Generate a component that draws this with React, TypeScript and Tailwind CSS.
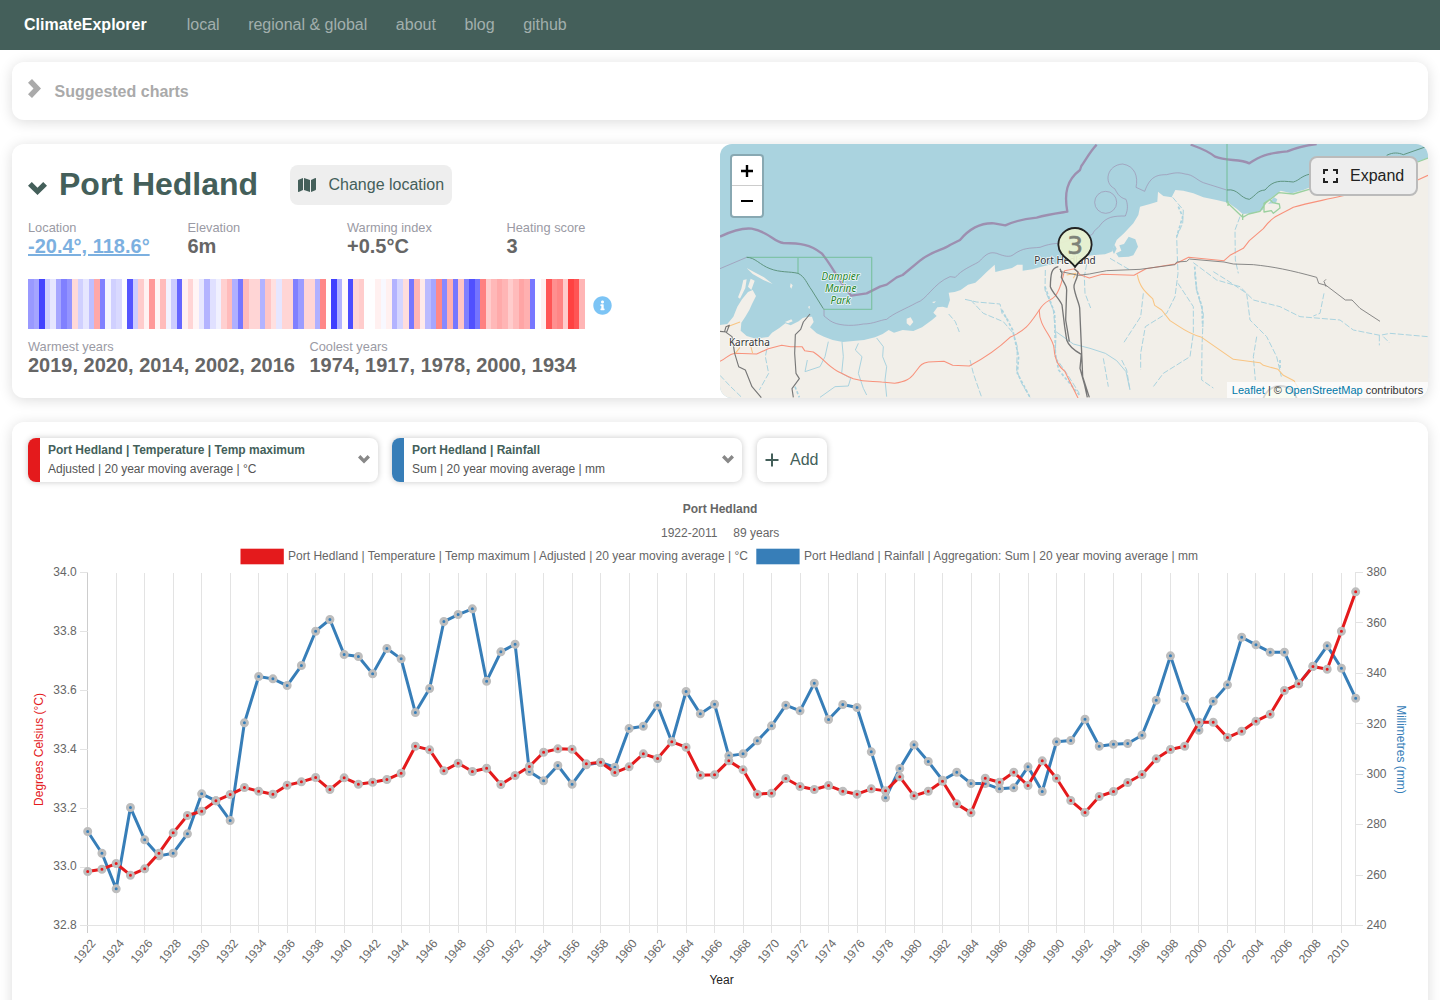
import React from "react";
import { FaMap, FaInfoCircle } from "react-icons/fa";

const stripes =
  "9999ff a5a5ff 4242ff ccccff e6e6ff a6a6ff 8080ff 9494ff ffd9d9 d0d0ff e6e6ff bfbfff ffa8a8 8080ff f4f4ff d0d0ff d9d9ff fcfcff 5555ff ccccff ffcccc fff2f2 ff9999 fff5f5 ffbbbb f2f2ff ccccff 6666ff fff0f0 ffd5d5 fff5f5 e6e6ff b3b3ff e0e0ff f0f0ff ffd0d0 ffbbbb b0b0ff 7777ff ffbbbb ffd5d5 ffd5d5 b3b3ff ffc5c5 ffe0e0 e6e6ff ffd5d5 ffd5d5 8080ff 9c9cff ffd5d5 ffd5d5 b0b0ff ff8888 ffffff 4040ff b3b3ff fffafa 4d4dff ffd5d5 ffcccc fefeff fefeff fff0f0 f8f8ff fff0f0 b3b3ff d5d5ff ffdddd 7777ff ffb5b5 ffeaea bbbbff a6a6ff ff8888 8888ff ffb0b0 7777ff ffc5c5 8080ff 5050ff 7474ff ff8080 ffcccc ffb8b8 ffaaaa ffb5b5 ffcccc ffbbbb ffa5a5 ffb0b0 7777ff fefeff fff0f0 ff5555 ff8f8f ff8585 ffcccc ff4242 ff5555 ffb5b5".split(" ");

// Series samples, one per year from 1922, in thirds of a pixel below the chart origin.
const rainfall = [
  814, 879, 986, 742, 839, 887, 879, 821, 701, 722, 781, 488, 349, 356, 376, 316, 213, 178, 283, 289, 341, 265, 296, 457, 385, 184, 163, 146,
  363, 275, 252, 634, 662, 616, 672, 614, 607, 621, 505, 498, 435, 545, 394, 461, 432, 587, 581, 542, 497, 435, 452, 369, 478, 433, 442, 575,
  713, 625, 554, 604, 660, 636, 670, 670, 686, 683, 620, 694, 545, 541, 477, 558, 552, 550, 525, 420, 287, 415, 510, 423, 374, 231, 254, 276,
  276, 371, 318, 257, 324, 414,
];
const temperature = [
  934, 927, 910, 945, 926, 879, 818, 766, 753, 722, 703, 682, 693, 702, 675, 665, 652, 688, 653, 672, 666, 658, 639, 558, 569, 632, 609, 634,
  624, 673, 646, 619, 576, 566, 567, 611, 606, 637, 620, 581, 595, 545, 561, 645, 644, 602, 629, 702, 699, 655, 679, 688, 676, 693, 702, 686,
  692, 650, 707, 693, 663, 731, 758, 654, 666, 636, 676, 602, 654, 721, 757, 709, 694, 667, 643, 596, 568, 558, 486, 486, 532, 513, 483, 462,
  391, 371, 319, 327, 213, 95,
];

const px = (i: number) => 87.7 + i * 14.247;
const py = (v: number) => 560.2 + v / 3;

function Series({ data, color }: { data: number[]; color: string }) {
  return (
    <g>
      <polyline points={data.map((v, i) => `${px(i)},${py(v)}`).join(" ")} fill="none" stroke={color} strokeWidth="3" strokeLinejoin="round" />
      {data.map((v, i) => (
        <circle key={i} cx={px(i)} cy={py(v)} r="3" fill={color} stroke="#bdbdbd" strokeWidth="3" />
      ))}
    </g>
  );
}

function Chart() {
  const years = Array.from({ length: 45 }, (_, i) => 1922 + i * 2);
  return (
    <svg width="1416" height="510" viewBox="12 490 1416 510" className="block text-[12px]" fontFamily="'Liberation Sans', Arial, sans-serif" fill="#666">
      <text x="720" y="513" textAnchor="middle" fontWeight="bold">Port Hedland</text>
      <text x="661" y="537">1922-2011</text>
      <text x="733.3" y="537">89 years</text>
      <rect x="240.5" y="548.7" width="43.3" height="15.6" fill="#e41a1c" />
      <text x="288" y="560" textLength="460">Port Hedland | Temperature | Temp maximum | Adjusted | 20 year moving average | °C</text>
      <rect x="756.3" y="548.7" width="43.3" height="15.6" fill="#377eb8" />
      <text x="804" y="560" textLength="394">Port Hedland | Rainfall | Aggregation: Sum | 20 year moving average | mm</text>
      <g shapeRendering="crispEdges" stroke="#e3e3e3">
        {years.map((y, i) => (
          <line key={y} x1={Math.floor(px(i * 2)) + 0.5} x2={Math.floor(px(i * 2)) + 0.5} y1="573" y2="933" stroke={i === 0 ? "#cdcdcd" : "#e3e3e3"} />
        ))}
        <line x1="1355.5" x2="1355.5" y1="572" y2="926" />
        <line x1="80" x2="1363" y1="925.5" y2="925.5" />
        {[0, 1, 2, 3, 4, 5].map((i) => (
          <line key={i} x1="80" x2="88" y1={Math.floor(572.5 + i * 58.9) + 0.5} y2={Math.floor(572.5 + i * 58.9) + 0.5} />
        ))}
        {[0, 1, 2, 3, 4, 5, 6].map((i) => (
          <line key={i} x1="1356" x2="1363" y1={Math.floor(572.5 + i * 50.45) + 0.5} y2={Math.floor(572.5 + i * 50.45) + 0.5} />
        ))}
      </g>
      {["34.0", "33.8", "33.6", "33.4", "33.2", "33.0", "32.8"].map((t, i) => (
        <text key={t} x="76.7" y={576.3 + i * 58.83} textAnchor="end">{t}</text>
      ))}
      {[380, 360, 340, 320, 300, 280, 260, 240].map((t, i) => (
        <text key={t} x="1366.5" y={576.3 + i * 50.43}>{t}</text>
      ))}
      {years.map((y, i) => (
        <text key={y} textAnchor="end" transform={`translate(${px(i * 2) + 5.5} 941) rotate(-50)`} dy="4">{y}</text>
      ))}
      <text transform="translate(43 749.5) rotate(-90)" textAnchor="middle" fill="#e41a1c">Degrees Celsius (°C)</text>
      <text transform="translate(1397 749.5) rotate(90)" textAnchor="middle" fill="#377eb8">Millimetres (mm)</text>
      <text x="721.5" y="984" textAnchor="middle" fill="#222">Year</text>
      <Series data={rainfall} color="#377eb8" />
      <Series data={temperature} color="#e41a1c" />
    </svg>
  );
}

function MapDrawing() {
  return (
    <svg width="708" height="254" viewBox="0 12 2124 762" className="block" fill="none" strokeLinejoin="round">
      <rect y="12" width="2124" height="762" fill="#aad3df" />
      <path
        fill="#f2efe9"
        d="M0 555 L22 552 40 530 52 500 66 478 84 456 98 450 108 468 96 492 88 510 76 530 64 548 62 572 80 588 108 596 145 591 156 578 178 564 196 550 212 556 236 544 248 534 262 530 276 530 281 546 270 562 290 580 312 590 338 600 368 606 400 603 432 600 465 592 488 582 506 570 522 578 548 570 580 573 606 562 636 540 650 528 640 518 652 502 668 500 682 504 690 480 686 458 704 456 722 450 744 434 766 428 784 412 800 396 824 374 826 396 850 390 876 384 892 374 908 374 908 392 938 388 964 380 988 374 1010 372 1034 358 1080 350 1125 345 1155 343 1175 335 1190 300 1212 280 1240 250 1255 225 1260 200 1290 192 1312 185 1314 155 1330 168 1355 172 1366 150 1390 152 1420 160 1450 172 1490 180 1525 188 1550 206 1568 222 1600 220 1628 210 1640 184 1670 162 1682 152 1715 160 1750 150 1800 130 2093 66 2124 54 V774 H0Z"
      />
      <g fill="#f2efe9">
        <path d="M80 384 L102 396 132 412 158 432 130 420 98 402Z M70 420 L80 418 76 444 60 476 54 472 64 446Z M92 416 L104 422 94 450 84 440Z M212 430 L218 436 214 446 210 440Z M560 536 L572 532 580 546 570 558 560 550Z M195 546 L214 538 218 544 204 550Z M264 500 L270 498 268 508Z M636 486 L648 484 642 490Z" />
      </g>
      <path fill="#aad3df" d="M1198 316 L1212 312 1226 290 1246 298 1254 320 1240 346 1226 350 1196 352 1188 340 1204 332Z M1176 330 L1184 314 1190 326 1182 342Z M1644 192 L1662 172 1672 178 1668 188Z" />
      <g stroke="#aad3df" strokeWidth="3" strokeDasharray="18 6">
        <path d="M686 522 L706 545 718 576 M752 480 L790 520 850 545 880 580 892 620 890 690 905 730 930 772 M735 478 L770 486 840 492 846 520 870 545 M750 660 L760 700 772 735 785 772 M145 605 L136 650 146 700 118 750 M0 706 L30 738 65 772 M976 390 L975 450 1000 510 1008 590 1005 650 1040 700 1078 760 M1100 372 L1093 410 1095 460 1112 504" />
        <path d="M1358 172 L1390 210 1388 250 1370 290 1372 350 1374 400 1365 470 1340 520 1276 560 1262 640 1262 690 M1374 430 L1420 500 1420 580 1410 650 1330 700 1300 740 M1424 400 L1430 450 1450 520 1446 620 1445 720 1480 744 M1420 368 L1490 420 1560 440 1600 480 1680 500 1740 530 1860 540 1900 570 1980 586 2010 580 2124 590 M1480 395 L1520 420 1580 460 1590 540 1640 590 1670 650 1684 710 M1610 590 L1600 650 1606 720 M1560 230 L1545 270 1546 360 1555 400 M1270 460 L1262 530 1210 610 M1812 460 L1800 520 1780 528 M1978 586 L1978 616 M1990 590 L2008 608 M1170 355 L1230 390 M1205 660 L1220 690 1230 750 M1150 655 L1165 740" />
      </g>
      <g stroke="#aad3df" strokeWidth="3">
        <path d="M325 605 L315 650 300 680 255 695 262 660 M366 606 L370 650 365 700 392 715 385 738 345 740 300 772 M415 610 L406 630 426 650 415 700 430 745 440 765 M470 594 L490 620 488 650 500 680 495 720 500 770 M1008 575 L1060 612 1110 625 1156 640 1190 662 1218 695 1230 750" />
      </g>
      <g stroke="#aad3df" strokeWidth="5" strokeDasharray="9 6">
        <path d="M846 510 L878 570 896 650 892 700 930 772 M975 440 L1004 520 1006 640 1016 690 1078 765 M1424 380 L1430 450 1446 500 1448 560 M1375 200 L1388 230 1370 290 M225 740 L238 772 M1680 660 L1680 690" />
      </g>
      <g stroke="#9d8fb0" strokeWidth="7">
        <path d="M0 290 C50 266 75 264 95 266 C150 276 160 306 190 309 C240 310 270 312 305 340 C335 375 360 430 394 467 L440 460 480 440 500 434 530 412 548 405 600 362 C640 330 670 330 690 315 L720 300 C745 270 780 248 822 250 L856 256 C890 240 920 236 950 233 C980 224 1010 220 1042 215 C1032 160 1040 120 1080 90 L1084 78 C1100 55 1110 35 1130 14" />
        <path d="M1412 14 C1440 24 1460 30 1485 50 C1520 64 1560 56 1588 70 C1620 48 1640 40 1702 34 C1730 22 1760 16 1790 12" />
      </g>
      <g stroke="#9d8fb0" strokeWidth="2">
        <path d="M0 386 L80 352 M312 506 V528 L330 542 C350 556 390 560 430 552 C460 552 480 540 500 538 C520 520 560 505 590 488 C620 480 640 430 690 410 L706 412 C725 390 750 380 776 366 C800 340 810 335 830 340 C855 350 870 352 880 344 C910 322 930 325 960 322 C985 312 1005 310 1020 310 L1075 292 1098 294 1118 282 C1125 265 1135 266 1140 256 C1160 230 1180 228 1216 228 C1226 205 1222 190 1218 178 C1195 172 1190 155 1184 146 C1150 130 1160 75 1208 72 C1245 78 1255 110 1248 142 L1274 154 C1290 110 1310 104 1340 104 C1370 96 1380 98 1395 102 C1420 104 1430 120 1450 128 L1520 150" />
        <circle cx="1157" cy="187" r="33" />
      </g>
      <g stroke="#6aba8c" strokeOpacity=".65" strokeWidth="4">
        <path d="M80 352 H455 V508 H310 M234 352 V400 M1521 12 V190" />
      </g>
      <g stroke="#5f9580" strokeWidth="3">
        <path d="M80 352 C105 352 120 375 150 386 C180 398 210 394 234 400 C255 410 260 430 275 450 L310 506 M1521 150 C1555 145 1560 175 1588 178 C1610 165 1610 152 1635 150 C1660 120 1680 122 1720 126 C1740 120 1740 110 1770 102 M2000 46 C2020 36 2035 38 2050 44 L2124 18" />
      </g>
      <g stroke="#9bd09f" strokeWidth="4">
        <path d="M1524 184 V198 M1524 190 L1568 232 1586 222 1620 214 1636 190 1676 158 1720 162 1775 146 M1632 190 L1650 178 1658 188 1678 192 1680 204 1660 220 1654 212 1632 216Z M2093 66 L2124 54 M1568 222 V240" />
      </g>
      <g stroke="#f8927c" strokeWidth="3.2">
        <path d="M0 664 C20 655 25 642 45 640 L110 642 145 626 185 616 212 620 246 620 254 632 280 636 C310 655 320 675 350 692 C370 702 375 706 400 716 C440 728 460 722 485 726 L524 730 C560 725 570 715 578 706 C600 680 600 670 625 666 L672 664 698 676 748 678 C800 650 830 630 870 592 C920 570 930 550 958 510 C975 480 990 485 1006 468 C1025 440 1025 420 1034 392 L1064 386 1080 404 1108 414 1146 403 1242 406 1278 386 1365 372 1406 352 1512 362 1530 346 1570 325 1588 302 1630 266 C1660 225 1680 225 1720 202 C1760 190 1790 185 1865 168 L2093 120 2124 106" />
        <path d="M958 508 C955 560 1000 590 1002 625 C1005 665 1018 680 1035 695 C1050 725 1062 750 1074 774" />
      </g>
      <g stroke="#f9c583" strokeWidth="3.2">
        <path d="M1252 404 C1258 440 1275 455 1298 476 L1304 496 1325 510 1350 542 C1380 560 1400 580 1445 592 L1540 658 1620 668 1630 676 1674 688 1690 706 1722 722 1735 745 M46 640 L60 622 M98 640 L90 610 M1040 405 L1068 400 1060 415 M22 560 L60 546" />
      </g>
      <g stroke="#777" strokeWidth="3.4">
        <path d="M0 574 L20 576 28 556 18 560 14 574 36 590 44 640 56 680 76 690 96 740 124 773 M270 522 L250 546 242 568 226 584 224 640 228 700 238 716 216 746 220 772" />
        <path d="M1020 394 L1075 406 1108 402 1160 392 1260 388 1365 374 1370 366 1400 364 1408 357 1512 366 1540 372 1600 374 C1660 380 1710 390 1790 412 L1796 430 1818 436 1876 480 1896 480 1920 505 1980 544 M1818 440 L1812 424 1818 418" strokeWidth="2.6" />
        <path
          strokeWidth="4"
          d="M1062 386 L1074 396 1072 408 C1068 425 1061 430 1062 442 C1066 470 1078 490 1079 505 L1085 640 1088 710 1108 772 M1015 380 C994 384 992 400 991 440 C998 460 1018 475 1026 495 L1034 560 1040 600 C1046 618 1060 630 1084 643 L1080 685 1094 735 1102 772 M1020 386 L1026 400 1024 412 C1034 435 1040 435 1040 450 L1037 540 1048 605"
        />
      </g>
      <g stroke="#fff" strokeOpacity=".8" strokeWidth="5" paintOrder="stroke" fontFamily="'Noto Sans', sans-serif" fontSize="30" textAnchor="middle">
        <text x="1035" y="371" textLength="184" fill="#333">Port Hedland</text>
        <text x="88" y="617" fill="#333">Karratha</text>
        <g fill="#24852c" fontStyle="italic">
          <text x="362" y="421" textLength="115">Dampier</text>
          <text x="362" y="456">Marine</text>
          <text x="362" y="493">Park</text>
        </g>
      </g>
      <g fill="#eaf2d0" stroke="#222" strokeWidth="5.5">
        <circle cx="1680" cy="790" r="52" stroke="#777" />
        <path fillOpacity=".93" d="M1065 381 C1052 358 1016 350 1015 314 A50 50 0 0 1 1115 314 C1114 350 1078 358 1065 381Z" />
      </g>
      <text x="1065" y="341" textAnchor="middle" fontFamily="'DejaVu Sans', sans-serif" fontSize="74" fill="#7d8278" stroke="#7d8278" strokeWidth="2">3</text>
    </svg>
  );
}

function Chevron({ w, h, color }: { w: number; h: number; color: string }) {
  return (
    <svg width={w} height={h} viewBox="0 0 19 13" fill={color} preserveAspectRatio="none">
      <path d="M0 3.8 3.8 0 9.5 5.7 15.2 0 19 3.8 9.5 13Z" />
    </svg>
  );
}

function Stat({ label, value, link }: { label: string; value: string; link?: boolean }) {
  return (
    <div>
      <div className="text-[12.8px] leading-[16px] text-[#9a9aa4]">{label}</div>
      <div className={link ? "text-xl leading-[20px] font-bold text-[#7cb0e0] underline" : "text-xl leading-[20px] font-bold text-[#666]"}>{value}</div>
    </div>
  );
}

function SeriesPill({ bar, title, detail }: { bar: string; title: string; detail: string }) {
  return (
    <div className="flex h-[44px] w-[350px] overflow-hidden rounded-lg bg-white text-xs shadow-[0_0_6px_rgba(0,0,0,0.22)]">
      <div className={`w-3 ${bar}`} />
      <div className="flex-1 pt-[3px] pl-2 leading-[19px]">
        <div className="font-bold text-[#445f5a]">{title}</div>
        <div className="text-[#555]">{detail}</div>
      </div>
      <div className="mt-[17px] mr-2">
        <Chevron w={12} h={8.5} color="#888" />
      </div>
    </div>
  );
}

export default function App() {
  const card = "rounded-xl bg-white shadow-[0_2px_14px_rgba(0,0,0,0.14)]";
  return (
    <div className="h-[1000px] w-[1440px] overflow-hidden bg-white font-['Liberation_Sans',Arial,sans-serif]">
      <header className="flex h-[50px] items-center bg-[#445f5a] pl-6 text-base text-[#a2afad]">
        <span className="font-bold text-white">ClimateExplorer</span>
        <nav className="flex gap-[28.5px] pl-10">
          <a>local</a>
          <a>regional &amp; global</a>
          <a>about</a>
          <a>blog</a>
          <a>github</a>
        </nav>
      </header>
      <main className="flex flex-col gap-6 px-3 pt-3">
        <section className={`flex h-[58px] gap-[13.5px] pl-4 ${card}`}>
          <svg className="mt-[17px]" width="13" height="19" viewBox="0 0 13 19" fill="#aaa">
            <path d="M4 0 13 9.5 4 19 0 15.3 5.5 9.5 0 3.7Z" />
          </svg>
          <h2 className="mt-[18px] font-bold text-[#aaa]">Suggested charts</h2>
        </section>

        <section className={`flex h-[254px] ${card}`}>
          <div className="w-[708px] pl-4">
            <div className="flex h-[61px] items-start pt-[21px]">
              <div className="mt-[17px] mr-3 flex">
                <Chevron w={19} h={13} color="#445f5a" />
              </div>
              <h1 className="w-[231px] text-[32px] leading-[38px] font-bold text-[#445f5a]">Port Hedland</h1>
              <button className="flex h-10 w-[162px] items-center rounded-lg bg-[#eee] pl-2 text-[#445f5a]">
                <FaMap size={18} />
                <span className="pl-[12.5px]">Change location</span>
              </button>
            </div>
            <div className="mt-[15px] flex">
              <div className="w-[159.5px]"><Stat label="Location" value="-20.4°, 118.6°" link /></div>
              <div className="w-[159.5px]"><Stat label="Elevation" value="6m" /></div>
              <div className="w-[159.5px]"><Stat label="Warming index" value="+0.5°C" /></div>
              <Stat label="Heating score" value="3" />
            </div>
            <div className="mt-[23px] flex items-center">
              <svg width="557" height="50" viewBox="0 0 557 50" shapeRendering="crispEdges">
                {stripes.map((c, i) => (
                  <rect key={i} x={(i * 557) / 101} width={5.6} height="50" fill={`#${c}`} />
                ))}
              </svg>
              <FaInfoCircle size={19} className="mt-[2px] ml-2 text-[#7cc4f5]" />
            </div>
            <div className="mt-[10px] flex gap-[14.5px]">
              <Stat label="Warmest years" value="2019, 2020, 2014, 2002, 2016" />
              <Stat label="Coolest years" value="1974, 1917, 1978, 2000, 1934" />
            </div>
          </div>
          <div className="relative h-[254px] w-[708px] overflow-hidden rounded-xl">
            <MapDrawing />
            <div className="absolute top-[10px] left-[10px] flex h-[64px] w-[34px] flex-col rounded border-2 border-black/20 bg-white bg-clip-padding">
              <div className="flex h-[30px] items-center justify-center border-b border-[#ccc]">
                <svg width="12" height="12" stroke="#000" strokeWidth="2.4"><path d="M0 6H12M6 0V12" /></svg>
              </div>
              <div className="flex h-[30px] items-center justify-center">
                <svg width="12" height="12" stroke="#000" strokeWidth="2"><path d="M0 6H12" /></svg>
              </div>
            </div>
            <button className="absolute top-3 right-[10px] flex h-10 w-[109px] items-center rounded-lg border-2 border-[#bbb] bg-[#eee] pl-[12px] text-[#222]">
              <svg width="15" height="14" viewBox="0 0 15 14" fill="none" stroke="#222" strokeWidth="2">
                <path d="M1 5V1H5M10 1H14V5M14 9V13H10M5 13H1V9" />
              </svg>
              <span className="pl-3">Expand</span>
            </button>
            <div className="absolute right-0 bottom-0 flex h-4 w-[201px] items-center justify-center bg-white/70 text-[11px] whitespace-pre text-[#333]">
              <span className="text-[#0078a8]">Leaflet</span> | © <span className="text-[#0078a8]">OpenStreetMap</span> contributors
            </div>
          </div>
        </section>

        <section className={`h-[620px] ${card}`}>
          <div className="flex h-[68px] gap-[14px] pt-4 pl-4">
            <SeriesPill bar="bg-[#e41a1c]" title="Port Hedland | Temperature | Temp maximum" detail="Adjusted | 20 year moving average | °C" />
            <SeriesPill bar="bg-[#377eb8]" title="Port Hedland | Rainfall" detail="Sum | 20 year moving average | mm" />
            <button className="ml-px flex h-[44px] w-[70px] items-center rounded-lg bg-white pl-2 text-[#445f5a] shadow-[0_0_6px_rgba(0,0,0,0.22)]">
              <svg width="14" height="14" stroke="#445f5a" strokeWidth="2"><path d="M0.5 7H13.5M7 0.5V13.5" /></svg>
              <span className="pl-[11px]">Add</span>
            </button>
          </div>
          <Chart />
        </section>
      </main>
    </div>
  );
}
